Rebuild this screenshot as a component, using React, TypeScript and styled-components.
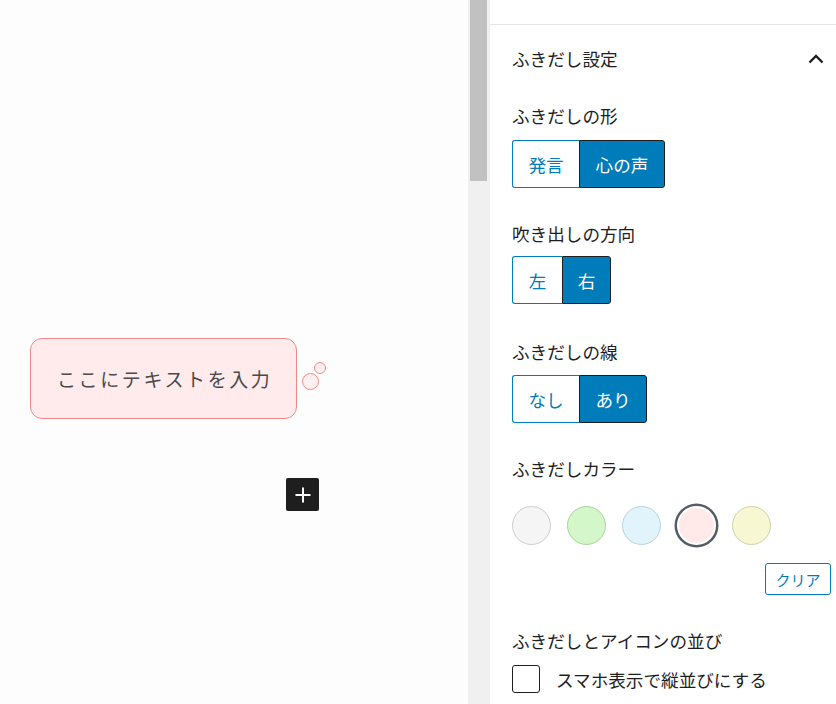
import React from "react";
import styled, { createGlobalStyle, css } from "styled-components";

const GlobalStyle = createGlobalStyle`
  html, body { margin: 0; padding: 0; }
  body {
    font-family: "Noto Sans CJK JP", "Noto Sans", "Liberation Sans", sans-serif;
    color: #1e1e1e;
    background: #fff;
  }
  * { box-sizing: border-box; }
`;

const Layout = styled.div`
  display: flex;
  width: 836px;
  height: 704px;
  overflow: hidden;
`;

const Canvas = styled.div`
  position: relative;
  width: 468px;
  flex: none;
  background: #fdfdfd;
  display: flex;
  flex-direction: column;
  padding: 338px 0 0 30px;
`;

const Bubble = styled.div`
  position: relative;
  width: 267px;
  height: 81px;
  border: 1px solid #f08a8a;
  border-radius: 12px;
  background: #ffebeb;
  display: flex;
  align-items: center;
  padding-left: 26px;
  font-size: 19px;
  letter-spacing: 2.6px;
  color: #4a4a4a;
`;

const Thought = styled.span<{ $size: number; $x: number; $y: number }>`
  position: absolute;
  width: ${(p) => p.$size}px;
  height: ${(p) => p.$size}px;
  left: ${(p) => p.$x}px;
  top: ${(p) => p.$y}px;
  border: 1px solid #f08a8a;
  border-radius: 50%;
  background: #fff0f0;
`;

const AddButton = styled.button`
  align-self: flex-start;
  margin: 59px 0 0 256px;
  width: 33px;
  height: 33px;
  border: none;
  border-radius: 2px;
  background: #1e1e1e;
  color: #fff;
  display: flex;
  align-items: center;
  justify-content: center;
  padding: 0;
`;

const ScrollTrack = styled.div`
  width: 22px;
  flex: none;
  background: #f0f0f0;
  padding: 0 3px 0 2px;
`;

const ScrollThumb = styled.div`
  height: 181px;
  background: #c1c1c1;
`;

const Sidebar = styled.div`
  flex: 1;
  background: #fff;
  display: flex;
  flex-direction: column;
`;

const TopBar = styled.div`
  height: 25px;
  border-bottom: 1px solid #e6e6e6;
  flex: none;
`;

const PanelHeader = styled.div`
  display: flex;
  align-items: center;
  justify-content: space-between;
  padding: 22px 12px 0 22px;
  height: 46px;
  font-size: 17.6px;
  line-height: 24px;
  color: #1e1e1e;
`;

const PanelBody = styled.div`
  padding: 33px 5px 0 22px;
  display: flex;
  flex-direction: column;
`;

const Section = styled.div<{ $gap?: number }>`
  display: flex;
  flex-direction: column;
  margin-bottom: ${(p) => p.$gap ?? 35}px;
`;

const Label = styled.div<{ $mb?: number }>`
  font-size: 17.6px;
  line-height: 24px;
  color: #1e1e1e;
  margin-bottom: ${(p) => p.$mb ?? 11}px;
`;

const Group = styled.div`
  display: flex;
`;

const SegButton = styled.button<{ $active?: boolean; $w: number }>`
  width: ${(p) => p.$w}px;
  height: 48px;
  font-family: inherit;
  font-size: 17.6px;
  padding: 0;
  margin: 0;
  border: 1px solid #007cba;
  background: #fff;
  color: #007cba;
  &:first-child { border-radius: 3px 0 0 3px; border-right: none; }
  &:last-child { border-radius: 0 3px 3px 0; }
  ${(p) =>
    p.$active &&
    css`
      background: #007cba;
      color: #fff;
      border-color: #1e1e1e;
    `}
  &:last-child { border-left: 1px solid #1e1e1e; }
`;

const Swatches = styled.div`
  display: flex;
  gap: 16px;
  padding-top: 14px;
`;

const Swatch = styled.button<{ $fill: string; $edge: string; $selected?: boolean }>`
  width: 39px;
  height: 39px;
  border-radius: 50%;
  padding: 0;
  background: ${(p) => p.$fill};
  border: 1px solid ${(p) => p.$edge};
  ${(p) =>
    p.$selected &&
    css`
      border: 2.5px solid #fff;
      box-shadow: 0 0 0 2.5px #555d66;
    `}
`;

const ClearRow = styled.div`
  display: flex;
  justify-content: flex-end;
  margin-top: 18px;
`;

const ClearButton = styled.button`
  width: 66px;
  height: 32px;
  border: 1px solid #007cba;
  border-radius: 3px;
  background: #fff;
  color: #007cba;
  font-family: inherit;
  font-size: 15px;
  padding: 0;
`;

const CheckRow = styled.label`
  display: flex;
  align-items: center;
  gap: 16px;
  font-size: 17.6px;
  color: #1e1e1e;
`;

const CheckBox = styled.span`
  width: 28px;
  height: 28px;
  border: 1px solid #1e1e1e;
  border-radius: 3px;
  background: #fff;
  flex: none;
`;

export default function App() {
  return (
    <>
      <GlobalStyle />
      <Layout>
        <Canvas>
          <Bubble>
            ここにテキストを入力
            <Thought $size={17} $x={271} $y={34} />
            <Thought $size={12} $x={283} $y={23} />
          </Bubble>
          <AddButton aria-label="add">
            <svg width="18" height="18" viewBox="0 0 18 18">
              <path d="M9 1.5v15M1.5 9h15" stroke="#fff" strokeWidth="2" />
            </svg>
          </AddButton>
        </Canvas>
        <ScrollTrack>
          <ScrollThumb />
        </ScrollTrack>
        <Sidebar>
          <TopBar />
          <PanelHeader>
            <span>ふきだし設定</span>
            <svg width="16" height="10" viewBox="0 0 16 10">
              <path d="M1.5 8.5L8 2l6.5 6.5" fill="none" stroke="#1e1e1e" strokeWidth="2.4" />
            </svg>
          </PanelHeader>
          <PanelBody>
            <Section $gap={34}>
              <Label $mb={12}>ふきだしの形</Label>
              <Group>
                <SegButton $w={67}>発言</SegButton>
                <SegButton $w={86} $active>心の声</SegButton>
              </Group>
            </Section>
            <Section $gap={36}>
              <Label $mb={10}>吹き出しの方向</Label>
              <Group>
                <SegButton $w={50}>左</SegButton>
                <SegButton $w={49} $active>右</SegButton>
              </Group>
            </Section>
            <Section $gap={34}>
              <Label>ふきだしの線</Label>
              <Group>
                <SegButton $w={67}>なし</SegButton>
                <SegButton $w={68} $active>あり</SegButton>
              </Group>
            </Section>
            <Section $gap={34}>
              <Label $mb={11}>ふきだしカラー</Label>
              <Swatches>
                <Swatch $fill="#f5f5f5" $edge="#cfcfcf" />
                <Swatch $fill="#d3f7c8" $edge="#a9d59c" />
                <Swatch $fill="#e1f4fc" $edge="#b8d3de" />
                <Swatch $fill="#ffe9e9" $edge="#e5bcbc" $selected />
                <Swatch $fill="#f8f7d4" $edge="#d3d1aa" />
              </Swatches>
              <ClearRow>
                <ClearButton>クリア</ClearButton>
              </ClearRow>
            </Section>
            <Section $gap={0}>
              <Label $mb={12}>ふきだしとアイコンの並び</Label>
              <CheckRow>
                <CheckBox />
                スマホ表示で縦並びにする
              </CheckRow>
            </Section>
          </PanelBody>
        </Sidebar>
      </Layout>
    </>
  );
}
